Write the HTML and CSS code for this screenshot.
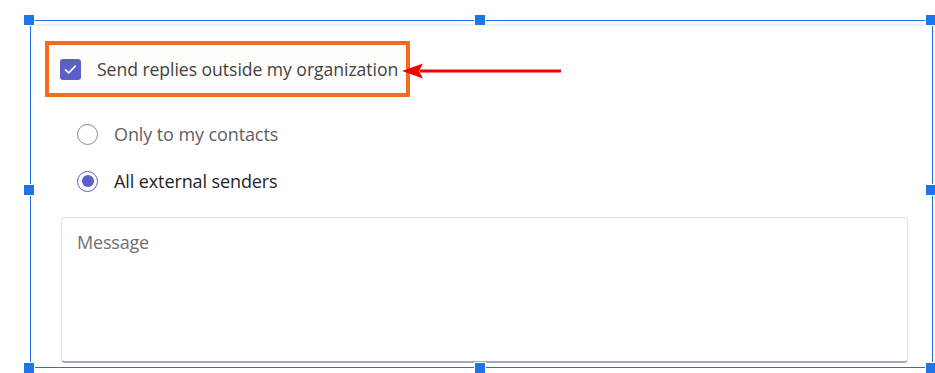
FILE: index.html
```html
<!DOCTYPE html>
<html>
<head>
<meta charset="utf-8">
<link rel="stylesheet" href="styles.css">
</head>
<body>
<div class="frame">
  <div class="panel">
    <div class="top-row">
      <label class="highlight">
        <span class="checkbox">
          <svg width="15" height="15" viewBox="0 0 15 15"><path d="M2.5 7.8 L5.8 10.8 L12.2 4.2" fill="none" stroke="#fff" stroke-width="1.7" stroke-linecap="round" stroke-linejoin="round"/></svg>
        </span>
        <span class="check-label">Send replies outside my organization</span>
      </label>
      <svg class="arrow" width="160" height="18" viewBox="0 0 160 18"><path d="M18 9 H159" stroke="#f20000" stroke-width="3"/><path d="M0 9 L21 1.5 L17 9 L21 16.5 Z" fill="#f20000"/></svg>
    </div>
    <div class="radios">
      <div class="radio-row">
        <span class="radio"></span>
        <span class="radio-label muted">Only to my contacts</span>
      </div>
      <div class="radio-row">
        <span class="radio checked"><span class="dot"></span></span>
        <span class="radio-label">All external senders</span>
      </div>
    </div>
    <div class="textarea"><span class="placeholder">Message</span></div>
  </div>
  <span class="handle h-tl"></span>
  <span class="handle h-tm"></span>
  <span class="handle h-tr"></span>
  <span class="handle h-ml"></span>
  <span class="handle h-mr"></span>
  <span class="handle h-bl"></span>
  <span class="handle h-bm"></span>
  <span class="handle h-br"></span>
</div>
</body>
</html>
```
FILE: styles.css
```css
html, body {
  margin: 0;
  padding: 0;
  background: #fff;
  height: 100%;
}
body {
  font-family: "Open Sans", "Noto Sans", sans-serif;
  color: #424242;
  padding-top: 20px;
  box-sizing: border-box;
}
.frame {
  position: relative;
  margin: 0 0 0 30px;
  width: 901px;
  height: 346px;
  border: 1px solid #1a73e8;
}
.panel {
  margin: 3px 6px 0 0;
  border-top: 2px solid #efeeec;
  padding: 15px 0 0 14px;
  height: 320px;
  box-sizing: border-box;
}
.top-row {
  display: flex;
  align-items: center;
  position: relative;
}
.highlight {
  display: flex;
  align-items: center;
  width: 365px;
  height: 56px;
  box-sizing: border-box;
  border: 4px solid #f76b1c;
  background: #fffdfa;
  padding-left: 11px;
}
.checkbox {
  width: 21px;
  height: 21px;
  border-radius: 3px;
  background: #5b5fc7;
  display: flex;
  align-items: center;
  justify-content: center;
  flex: none;
}
.check-label {
  margin-left: 16px;
  font-size: 17.6px;
  color: #424242;
  white-space: nowrap;
  letter-spacing: -0.05px;
}
.arrow {
  position: absolute;
  left: 357px;
  top: 21px;
}
.radios {
  display: flex;
  flex-direction: column;
  gap: 25px;
  padding: 26px 0 0 32px;
}
.radio-row {
  display: flex;
  align-items: center;
  height: 22px;
}
.radio {
  width: 21px;
  height: 21px;
  border-radius: 50%;
  border: 1.5px solid #8a8a8a;
  box-sizing: border-box;
  display: flex;
  align-items: center;
  justify-content: center;
  flex: none;
}
.radio.checked {
  border-color: #5b5fc7;
}
.dot {
  width: 12px;
  height: 12px;
  border-radius: 50%;
  background: #5b5fc7;
}
.radio-label {
  margin-left: 16px;
  font-size: 18px;
  color: #242424;
  letter-spacing: -0.1px;
}
.radio-label.muted {
  color: #616161;
}
.textarea {
  margin: 25px 0 0 16px;
  width: 847px;
  height: 146px;
  box-sizing: border-box;
  border: 1px solid #e1e1e1;
  border-bottom: 2px solid #a8a8a8;
  border-radius: 4px;
  padding: 12px 15px;
  background: #fff;
}
.placeholder {
  font-size: 18px;
  color: #707070;
  letter-spacing: -0.2px;
}
.handle {
  position: absolute;
  width: 10px;
  height: 10px;
  background: #1f75e8;
  border: 1px solid #fff;
}
.h-tl { left: -8px; top: -7px; }
.h-tm { left: 443px; top: -7px; }
.h-tr { left: 894px; top: -7px; }
.h-ml { left: -8px; top: 163px; }
.h-mr { left: 894px; top: 163px; }
.h-bl { left: -8px; top: 341px; }
.h-bm { left: 443px; top: 341px; }
.h-br { left: 894px; top: 341px; }
```
